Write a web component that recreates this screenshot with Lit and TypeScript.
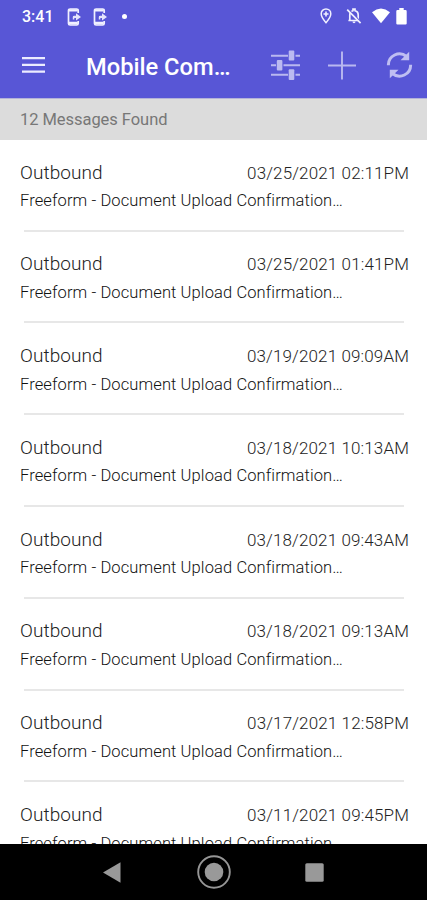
import { LitElement, html, css } from "lit";
import { customElement, property } from "lit/decorators.js";

const phoneIcon = html`<svg class="phone" viewBox="0 0 15 18" width="15" height="18">
  <path d="M11.2 5V2.6Q11.2 1 9.6 1H3.1Q1.5 1 1.5 2.6V15.4Q1.5 17 3.1 17H9.6Q11.2 17 11.2 15.4V13" fill="none" stroke="#f0f0ff" stroke-width="1.7"/>
  <path d="M2 1.2h8.800v2.300H2zM2 13.800h8.800v2.800H2z" fill="#f0f0ff"/>
  <path d="M5.800 11.500V9Q5.800 7.700 7.200 7.700H9V5.200L14 8.900 9 12.400V10H7.300V11.500z" fill="#e4e4fc"/>
</svg>`;

@customElement("status-bar")
export class StatusBar extends LitElement {
  static styles = css`
    :host { display: flex; height: 32px; align-items: center; padding: 1px 20px 0 22px; box-sizing: border-box; color: #fff; }
    .time { font-size: 16px; font-weight: 500; line-height: 20px; width: 45px; }
    svg { display: block; flex: none; }
    .phone { margin-right: 11px; }
    .dot { width: 5px; height: 5px; border-radius: 50%; background: #fff; margin-left: 2.500px; margin-top: -1px; }
    .right { margin-left: auto; display: flex; align-items: center; padding-bottom: 1px; }
    .pin { margin-right: 14px; }
    .bell { margin-right: 10px; }
    .wifi { margin-right: 6px; }
  `;
  render() {
    return html`
      <span class="time">3:41</span>${phoneIcon}${phoneIcon}<span class="dot"></span>
      <div class="right">
        <svg class="pin" viewBox="0 0 12 16" width="12" height="16">
          <path d="M6 1C3.200 1 1.200 3.100 1.200 5.800 1.200 9.200 6 14.700 6 14.700S10.800 9.200 10.800 5.800C10.800 3.100 8.800 1 6 1z" fill="none" stroke="#f0f0ff" stroke-width="1.500"/>
          <path d="M6 3.500v5M3.500 6h5" stroke="#f0f0ff" stroke-width="1.600"/>
        </svg>
        <svg class="bell" viewBox="0 0 16 16" width="16" height="16">
          <path d="M3.800 12V7Q3.800 3.300 7 2.600V1.200h2v1.400Q12.200 3.300 12.200 7V12M2.400 12.500H13.500" fill="none" stroke="#f0f0ff" stroke-width="1.700"/>
          <path d="M6.500 13.600h3Q9.500 15.200 8 15.200T6.500 13.600z" fill="#f0f0ff"/>
          <path d="M2.200 1.200L15.200 14.600" stroke="#5856d6" stroke-width="1.600"/>
          <path d="M1.200 1.700L14.600 15.200" stroke="#f0f0ff" stroke-width="1.700"/>
        </svg>
        <svg class="wifi" viewBox="0 0 18 16" width="18" height="16">
          <path d="M0 4.200Q9-3.200 18 4.200L9 15.200z" fill="#fff"/>
        </svg>
        <svg viewBox="0 0 11 17" width="11" height="17">
          <path d="M3.300 0h4.400v2H9.500Q10.700 2 10.700 3.200V15.600Q10.700 16.600 9.600 16.600H1.400Q.3 16.600 .3 15.600V3.200Q.3 2 1.500 2H3.300z" fill="#fff"/>
        </svg>
      </div>`;
  }
}

@customElement("title-bar")
export class TitleBar extends LitElement {
  static styles = css`
    :host { display: flex; height: 66px; align-items: center; padding: 0 14.500px 0 22px; box-sizing: border-box; color: #fff; }
    svg { display: block; flex: none; }
    .title { margin-left: 41px; width: 147px; font-size: 23.700px; font-weight: 500; line-height: 30px; padding-top: 3px; white-space: nowrap; }
    .tune { margin-left: auto; margin-right: 28px; }
    .plus { margin-right: 29.500px; }
  `;
  render() {
    return html`
      <svg viewBox="0 0 23 18" width="23" height="18">
        <path d="M0 2.200h23M0 8.900h23M0 15.600h23" stroke="#ececff" stroke-width="2.300"/>
      </svg>
      <div class="title">Mobile Com…</div>
      <svg class="tune" viewBox="0 0 29 30" width="29" height="30">
        <g fill="none" stroke="#b9b8f0" stroke-width="1.900">
          <path d="M0 5.700h17M24.500 5.700H29M0 15.200h5M12.500 15.200H29M0 24.700h17M24.500 24.700H29"/>
        </g>
        <g fill="#bbbaf1">
          <rect x="17.700" y="0.600" width="5.600" height="10" rx="1"/>
          <rect x="5.800" y="10" width="5.600" height="10.600" rx="1"/>
          <rect x="17.700" y="19.300" width="5.600" height="10.600" rx="1"/>
        </g>
      </svg>
      <svg class="plus" viewBox="0 0 28 29" width="28" height="29">
        <path d="M14 .500v28M0 14.500h28" stroke="#b9b8f0" stroke-width="1.900"/>
      </svg>
      <svg viewBox="0 0 27 28" width="27" height="28">
        <g fill="none" stroke="#bfbef2" stroke-width="3">
          <path d="M2.400 14.200A11 11 0 0 1 20.500 5.500"/>
          <path d="M24.600 13.800A11 11 0 0 1 6.500 22.500"/>
        </g>
        <path d="M23.200 .700V9.300H14.500zM3.800 27.300V18.700H12.500z" fill="#bfbef2"/>
      </svg>`;
  }
}

@customElement("message-row")
export class MessageRow extends LitElement {
  @property() date = "";
  static styles = css`
    :host { display: block; height: 91.800px; box-sizing: border-box; padding: 20px 18px 0 20px; color: #222; font-weight: 300; flex: none; }
    .head { display: flex; justify-content: space-between; align-items: baseline; height: 28.500px; line-height: 26px; white-space: nowrap; }
    .kind { font-size: 19px; letter-spacing: .08px; }
    .date { font-size: 17px; letter-spacing: .13px; }
    .subject { font-size: 16.500px; line-height: 26px; letter-spacing: .11px; color: #111; white-space: nowrap; }
    .rule { height: 2px; margin: 15.700px 5px 0 4px; background: #e7e7e7; }
  `;
  render() {
    return html`
      <div class="head"><span class="kind">Outbound</span><span class="date">${this.date}</span></div>
      <div class="subject">Freeform - Document Upload Confirmation…</div>
      <div class="rule"></div>`;
  }
}

@customElement("nav-bar")
export class NavBar extends LitElement {
  static styles = css`
    :host { display: flex; height: 56px; flex: none; background: #000; align-items: center; justify-content: center; }
    svg { display: block; }
    .back { margin-right: 76px; }
    .home { margin-right: 74px; }
  `;
  render() {
    return html`
      <svg class="back" viewBox="0 0 18 21" width="18" height="21"><path d="M0 10.500L17.500 .300V20.700z" fill="#999"/></svg>
      <svg class="home" viewBox="0 0 34 34" width="34" height="34">
        <circle cx="17" cy="17" r="15.800" fill="none" stroke="#969696" stroke-width="1.900"/>
        <circle cx="17" cy="17" r="9.300" fill="#999"/>
      </svg>
      <svg viewBox="0 0 19 19" width="19" height="19"><rect x=".300" y=".300" width="18.400" height="18.400" rx="1.500" fill="#999"/></svg>`;
  }
}

@customElement("app-root")
export class AppRoot extends LitElement {
  static styles = css`
    :host { display: flex; flex-direction: column; height: 900px; width: 427px; overflow: hidden; background: #fff; font-family: Roboto, sans-serif; }
    .top { background: #5856d6; height: 98px; flex: none; }
    .count { height: 41.500px; flex: none; box-sizing: border-box; background: #dcdcdc; border-top: 1px solid #b4b3d8; padding-left: 20px; font-size: 16.500px; line-height: 41px; color: #777; letter-spacing: -.05px; }
    .list { flex: 1; min-height: 0; overflow: hidden; display: flex; flex-direction: column; }
  `;
  dates = [
    "03/25/2021 02:11PM", "03/25/2021 01:41PM", "03/19/2021 09:09AM", "03/18/2021 10:13AM",
    "03/18/2021 09:43AM", "03/18/2021 09:13AM", "03/17/2021 12:58PM", "03/11/2021 09:45PM",
  ];
  render() {
    return html`
      <div class="top"><status-bar></status-bar><title-bar></title-bar></div>
      <div class="count">12 Messages Found</div>
      <div class="list">${this.dates.map((d) => html`<message-row .date=${d}></message-row>`)}</div>
      <nav-bar></nav-bar>`;
  }
}
